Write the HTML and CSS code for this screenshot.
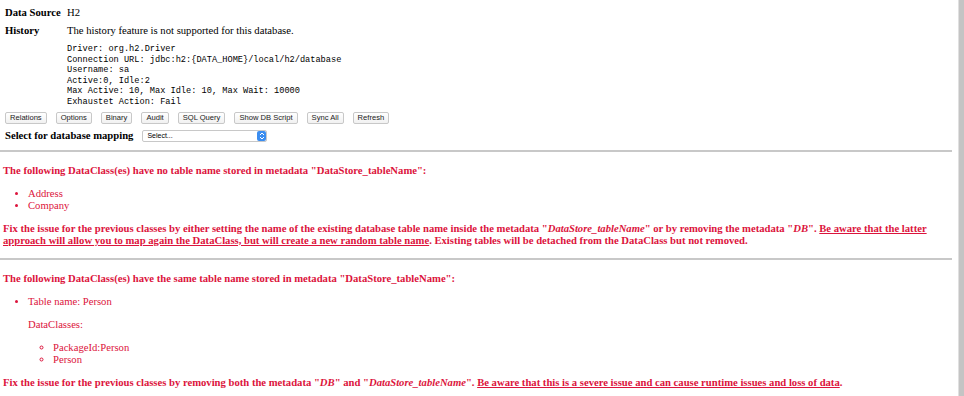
FILE: index.html
```html
<!DOCTYPE html>
<html>

<head>
    <title>Data Source</title>
    <link rel="stylesheet" href="styles.css">
</head>

<body>
    <div class="page">
        <table class="info">
            <tr>
                <td class="label">Data Source</td>
                <td>H2</td>
            </tr>
            <tr>
                <td class="label">History</td>
                <td>
                    The history feature is not supported for this database.
                    <pre class="details">Driver: org.h2.Driver
Connection URL: jdbc:h2:{DATA_HOME}/local/h2/database
Username: sa
Active:0, Idle:2
Max Active: 10, Max Idle: 10, Max Wait: 10000
Exhaustet Action: Fail</pre>
                </td>
            </tr>
        </table>

        <div class="toolbar">
            <button>Relations</button>
            <button>Options</button>
            <button>Binary</button>
            <button>Audit</button>
            <button>SQL Query</button>
            <button>Show DB Script</button>
            <button>Sync All</button>
            <button>Refresh</button>
        </div>

        <div class="mapping">
            <b>Select for database mapping</b>
            <div class="select">
                <span>Select...</span>
                <span class="spinner">
                    <svg width="6" height="8" viewBox="0 0 6 8">
                        <path d="M1 3 L3 1 L5 3" fill="none" stroke="#fff" stroke-width="1"/>
                        <path d="M1 5 L3 7 L5 5" fill="none" stroke="#fff" stroke-width="1"/>
                    </svg>
                </span>
            </div>
        </div>

        <hr>

        <div class="issues">
            <p><b>The following DataClass(es) have no table name stored in metadata "DataStore_tableName":</b></p>
            <ul>
                <li>Address</li>
                <li>Company</li>
            </ul>
            <p><b>Fix the issue for the previous classes by either setting the name of the existing database table name inside the metadata "<i>DataStore_tableName</i>" or by removing the metadata "<i>DB</i>". <u>Be aware that the latter approach will allow you to map again the DataClass, but will create a new random table name</u>. Existing tables will be detached from the DataClass but not removed.</b></p>
        </div>

        <hr>

        <div class="issues">
            <p><b>The following DataClass(es) have the same table name stored in metadata "DataStore_tableName":</b></p>
            <ul>
                <li>Table name: Person
                    <p>DataClasses:</p>
                    <ul class="sub">
                        <li>PackageId:Person</li>
                        <li>Person</li>
                    </ul>
                </li>
            </ul>
            <p><b>Fix the issue for the previous classes by removing both the metadata "<i>DB</i>" and "<i>DataStore_tableName</i>". <u>Be aware that this is a severe issue and can cause runtime issues and loss of data</u>.</b></p>
        </div>
    </div>
    <div class="edge"></div>
</body>

</html>
```

FILE: styles.css
```css
body {
    font-family: "Liberation Serif", "Times New Roman", serif;
    font-size: 10.65px;
    line-height: 12px;
    margin: 0;
    display: flex;
    min-height: 396px;
    background: #fff;
}

.page {
    flex: 1;
    padding: 5px 6px 0 3px;
    overflow: hidden;
}

.edge {
    width: 5px;
    background: #c4c4c4;
    border-left: 1px solid #e0e0e0;
}

.info {
    border-collapse: collapse;
    margin-left: 2px;
}

.info td {
    vertical-align: top;
    padding: 2px 2px 4px 0;
}

.info .label {
    font-weight: bold;
    width: 60px;
}

.details {
    font-family: "Liberation Mono", "Courier New", monospace;
    font-size: 8.65px;
    line-height: 10.6px;
    margin: 7px 0 0 0;
}

.toolbar {
    display: flex;
    gap: 9px;
    margin: 0 0 0 2px;
}

.toolbar button {
    font-family: "Liberation Sans", Arial, sans-serif;
    font-size: 7.6px;
    height: 12px;
    padding: 0 4px;
    background: linear-gradient(#ffffff, #f1f1f1);
    border: 1px solid #c8c8c8;
    border-radius: 2px;
    color: #222;
    line-height: 10px;
}

.mapping {
    display: flex;
    align-items: center;
    gap: 9px;
    margin: 6px 0 0 2px;
}

.select {
    width: 125px;
    height: 12px;
    box-sizing: border-box;
    border: 1px solid #c8c8c8;
    border-radius: 2px;
    background: #fff;
    display: flex;
    align-items: center;
    justify-content: space-between;
    font-family: "Liberation Sans", Arial, sans-serif;
    font-size: 7px;
    padding-left: 4px;
}

.spinner {
    width: 9px;
    height: 10px;
    background: #3b8df0;
    border-radius: 2px;
    display: flex;
    align-items: center;
    justify-content: center;
}

hr {
    border: none;
    border-top: 2px solid #c8c8c8;
    margin: 8px 0 0 -3px;
}

.issues {
    color: #dc143c;
    padding-top: 2px;
}

.issues p {
    margin: 11px 0;
}

.issues ul {
    margin: 11px 0;
    padding-left: 25px;
}

.issues ul.sub {
    list-style-type: circle;
}
```
